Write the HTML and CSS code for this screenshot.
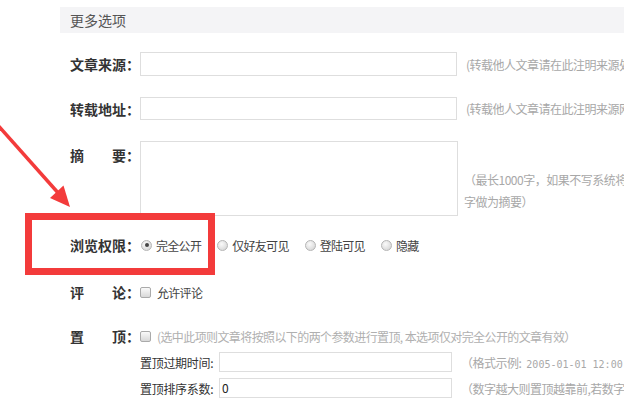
FILE: index.html
```html
<!DOCTYPE html>
<html lang="zh-CN">
<head>
<meta charset="utf-8">
<title>更多选项</title>
<link rel="stylesheet" href="styles.css">
</head>
<body>
<div class="page">
  <div class="head">更多选项</div>
  <div class="form">
    <div class="row r1">
      <label class="lbl">文章来源：</label>
      <span class="inp w317"></span>
      <span class="hint">(转载他人文章请在此注明来源处，如：xxx网站)</span>
    </div>
    <div class="row r2">
      <label class="lbl">转载地址：</label>
      <span class="inp w317"></span>
      <span class="hint">(转载他人文章请在此注明来源网址)</span>
    </div>
    <div class="row r3">
      <label class="lbl lbl-top"><span>摘</span><span>要：</span></label>
      <span class="area"></span>
      <span class="hint hint-multi">（最长1000字，如果不写系统将自动截取文章前200个<br>字做为摘要）</span>
    </div>
    <div class="row r4">
      <label class="lbl">浏览权限：</label>
      <span class="opt"><span class="radio on"></span>完全公开</span>
      <span class="opt"><span class="radio"></span>仅好友可见</span>
      <span class="opt"><span class="radio"></span>登陆可见</span>
      <span class="opt"><span class="radio"></span>隐藏</span>
    </div>
    <div class="row r5">
      <label class="lbl"><span>评</span><span>论：</span></label>
      <span class="opt"><span class="check"></span>允许评论</span>
    </div>
    <div class="row r6">
      <label class="lbl"><span>置</span><span>顶：</span></label>
      <span class="opt"><span class="check"></span><span class="hint2">(选中此项则文章将按照以下的两个参数进行置顶, 本选项仅对完全公开的文章有效）</span></span>
    </div>
    <div class="sub s1">
      <span class="slbl">置顶过期时间:</span>
      <span class="inp small w233"></span>
      <span class="hint">（格式示例:<span class="mono">2005-01-01 12:00:00</span>)</span>
    </div>
    <div class="sub s2">
      <span class="slbl">置顶排序系数:</span>
      <span class="inp small w233"><span class="val">0</span></span>
      <span class="hint">（数字越大则置顶越靠前,若数字相同则按时间排序)</span>
    </div>
  </div>
  <div class="redbox"></div>
  <svg class="arrow" width="80" height="215" viewBox="0 0 80 215">
    <line x1="-6" y1="121" x2="60" y2="195" stroke="#f33b3b" stroke-width="3.5"/>
    <polygon points="70,207 50,198 63.5,185.5" fill="#f33b3b"/>
  </svg>
</div>
</body>
</html>
```

FILE: styles.css
```css
html, body {
  margin: 0;
  padding: 0;
  background: #fff;
  overflow: hidden;
}
body {
  width: 624px;
  height: 401px;
  font-family: "Noto Sans CJK SC", "Noto Sans", sans-serif;
  color: #333;
}
.page {
  position: relative;
  padding: 7px 0 0 60px;
  width: 900px;
}
.head {
  height: 26px;
  line-height: 26px;
  background: #f4f4f6;
  padding-left: 10px;
  font-size: 14px;
  color: #555;
}
.form {
  padding-left: 10px;
}
.row {
  display: flex;
  align-items: center;
  white-space: nowrap;
}
.r1 { margin-top: 19px; height: 24px; }
.r2 { margin-top: 21px; height: 23px; }
.r3 { margin-top: 21px; align-items: flex-start; }
.r4 { margin-top: 17px; height: 24px; }
.r5 { margin-top: 23px; height: 24px; }
.r6 { margin-top: 20px; height: 24px; }
.lbl {
  width: 70px;
  flex: none;
  display: flex;
  justify-content: space-between;
  font-size: 14px;
  font-weight: bold;
  color: #333;
}
.lbl-top { padding-top: 4px; }
.inp {
  display: flex;
  align-items: center;
  box-sizing: border-box;
  height: 100%;
  border: 1px solid #dedede;
  background: #fff;
  flex: none;
}
.w317 { width: 317px; }
.w233 { width: 233px; }
.area {
  display: block;
  box-sizing: border-box;
  width: 318px;
  height: 75px;
  border: 1px solid #dedede;
  flex: none;
}
.hint {
  margin-left: 9px;
  font-size: 12px;
  color: #a8a8a8;
  letter-spacing: -0.5px;
}
.hint-multi {
  align-self: flex-end;
  margin-left: 6px;
  line-height: 22px;
  margin-bottom: 3px;
}
.opt {
  display: flex;
  align-items: center;
  font-size: 12px;
  color: #444;
  margin-right: 15px;
  letter-spacing: -0.7px;
}
.radio {
  width: 11px;
  height: 11px;
  box-sizing: border-box;
  border-radius: 50%;
  border: 1px solid #b5b5b5;
  background: radial-gradient(circle at 40% 35%, #fafafa 0%, #dcdcdc 70%, #cfcfcf 100%);
  margin: 0 4px 0 1px;
  position: relative;
}
.radio.on::after {
  content: "";
  position: absolute;
  left: 2.5px;
  top: 2.5px;
  width: 4px;
  height: 4px;
  border-radius: 50%;
  background: #444;
}
.check {
  width: 11px;
  height: 11px;
  box-sizing: border-box;
  border: 1px solid #aaa;
  border-radius: 2px;
  background: linear-gradient(#fafafa, #d8d8d8);
  margin: 0 6px 0 0;
}
.hint2 {
  font-size: 12px;
  color: #b0b0b0;
  letter-spacing: -0.6px;
}
.sub {
  display: flex;
  align-items: center;
  white-space: nowrap;
  padding-left: 70px;
  height: 20px;
}
.s1 { margin-top: 4px; }
.s2 { margin-top: 6px; }
.slbl {
  width: 79px;
  flex: none;
  font-size: 12px;
  color: #333;
  letter-spacing: -0.3px;
}
.small { height: 20px; }
.val {
  font-size: 12px;
  line-height: 16px;
  padding-left: 2px;
  color: #222;
}
.mono {
  font-family: "DejaVu Sans Mono", monospace;
  font-size: 10px;
  letter-spacing: 0;
  margin-left: 5px;
}
.redbox {
  position: absolute;
  left: 25px;
  top: 213px;
  width: 190px;
  height: 62px;
  box-sizing: border-box;
  border: 7px solid #f33b3b;
}
.arrow {
  position: absolute;
  left: 0;
  top: 0;
}
```
